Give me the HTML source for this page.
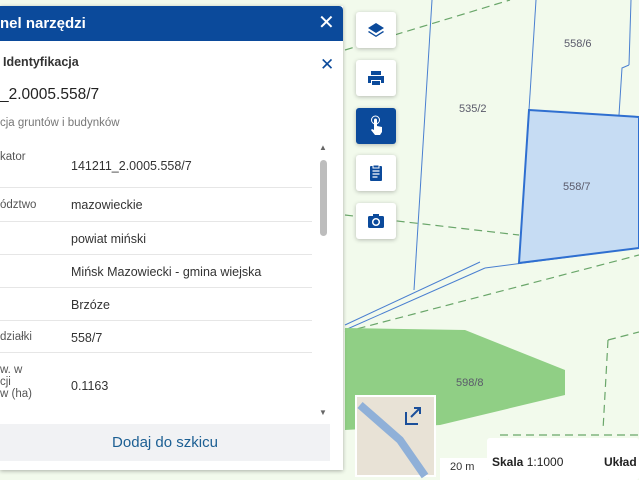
<!DOCTYPE html>
<html><head><meta charset="utf-8"><style>
*{margin:0;padding:0;box-sizing:border-box}
body{width:639px;height:480px;overflow:hidden;position:relative;background:#f2faec;font-family:"Liberation Sans",sans-serif}
.abs{position:absolute}
.panel{left:0;top:6px;width:343px;height:464px;background:#fff;box-shadow:0 1px 4px rgba(0,0,0,.3)}
.hdr{left:0;top:0;width:343px;height:35px;background:#0b4a9b;color:#fff;font-weight:bold;font-size:15px;line-height:35px;padding-left:0;border-radius:0 4px 0 0}
.row{position:absolute;left:0;width:312px;border-bottom:1px solid #e6e6e6;font-size:12.5px;color:#333}
.lab{position:absolute;left:0;color:#555;font-size:11.5px}
.val{position:absolute;left:71px}
.btn{position:absolute;left:356px;width:40px;height:36px;background:#fff;border-radius:3px;box-shadow:0 1px 4px rgba(0,0,0,.25);display:flex;align-items:center;justify-content:center}
</style></head><body>
<svg class="abs" style="left:0;top:0" width="639" height="480">
<g fill="none" stroke="#4a7fd0" stroke-width="1">
<line x1="432" y1="0" x2="414" y2="290"/><line x1="536" y1="0" x2="529" y2="110"/>
<line x1="631" y1="0" x2="629" y2="65"/><polyline points="629,65 622,68 619,115"/>
<line x1="345" y1="325" x2="480" y2="262"/><line x1="345" y1="330" x2="485" y2="268"/>
<line x1="485" y1="268" x2="639" y2="248"/>
</g>
<polygon points="529,110 639,117 639,248 519,263" fill="#c6dcf3" stroke="#2f6fd0" stroke-width="2"/>
<g fill="none" stroke="#6aa66a" stroke-width="1.2" stroke-dasharray="8,5">
<line x1="345" y1="50" x2="510" y2="0"/><line x1="345" y1="215" x2="519" y2="235"/>
<line x1="345" y1="332" x2="639" y2="255"/>
<line x1="608" y1="340" x2="603" y2="430"/><line x1="608" y1="340" x2="639" y2="332"/>
<line x1="500" y1="435" x2="639" y2="435"/>
</g>
<polygon points="345,328 465,330 565,370 565,395 440,425 345,430" fill="#90cf85"/>
<g font-size="11" fill="#5a5a6a" font-family="Liberation Sans"><text x="459" y="112">535/2</text><text x="564" y="47">558/6</text><text x="563" y="190">558/7</text><text x="456" y="386">598/8</text></g>
<rect x="356" y="396" width="79" height="80" fill="#e8e2d6" stroke="#fff" stroke-width="2"/>
<path d="M360,405 L400,440 L425,476" stroke="#8fb0d8" stroke-width="8" fill="none"/>
<path d="M406,412 v12 h12 M420,408 l-9,9 M414,408 h6 v6" stroke="#1b4f9a" stroke-width="2" fill="none"/>
<rect x="440" y="458" width="48" height="22" fill="#fff"/><text x="450" y="470" font-size="11" fill="#333">20 m</text>
<rect x="487" y="438" width="152" height="42" rx="3" fill="#fff"/>
<text x="492" y="466" font-size="12" fill="#222"><tspan font-weight="bold">Skala</tspan> 1:1000</text>
<text x="604" y="466" font-size="12" font-weight="bold" fill="#222">Układ</text>
</svg>
<div class="btn" style="top:12px"><svg width="20" height="20" viewBox="0 0 20 20"><path d="M10 3 L18 8 L10 13 L2 8Z M3 11 L10 15.5 L17 11 L18 12 L10 17 L2 12Z" fill="#0b4a9b"/></svg></div>
<div class="btn" style="top:60px"><svg width="20" height="20" viewBox="0 0 20 20"><path d="M5 3h10v4H5z M2 8h16v7h-3v-3H5v3H2z M6 13h8v4H6z" fill="#0b4a9b"/></svg></div>
<div class="btn" style="top:108px;background:#0b4a9b"><svg width="20" height="22" viewBox="0 0 20 22"><path d="M8 5a1.5 1.5 0 0 1 3 0v6l5 1v5l-2 3H9l-4-5 1-1 2 1z" fill="#fff"/><circle cx="9.5" cy="5" r="4" fill="none" stroke="#fff"/></svg></div>
<div class="btn" style="top:155px"><svg width="20" height="20" viewBox="0 0 20 20"><rect x="4" y="3" width="12" height="15" rx="1" fill="#0b4a9b"/><rect x="7" y="2" width="6" height="3" fill="#0b4a9b" stroke="#fff"/><path d="M6.5 8h7M6.5 11h7M6.5 14h5" stroke="#fff" stroke-width="1.3"/></svg></div>
<div class="btn" style="top:203px"><svg width="20" height="20" viewBox="0 0 20 20"><rect x="2" y="5" width="16" height="12" rx="1.5" fill="#0b4a9b"/><rect x="7" y="3" width="6" height="3" fill="#0b4a9b"/><circle cx="10" cy="11" r="3.3" fill="none" stroke="#fff" stroke-width="1.5"/></svg></div>
<div class="abs panel">
<div class="abs hdr">nel narzędzi<span style="position:absolute;left:318px;font-weight:normal;font-size:20px">✕</span></div>
<div class="abs" style="left:3px;top:49px;font-weight:bold;font-size:12.5px;color:#333">Identyfikacja</div>
<div class="abs" style="left:320px;top:49px;font-size:17px;color:#0b4a9b">✕</div>
<div class="abs" style="left:0;top:80px;font-size:15.5px;color:#222">_2.0005.558/7</div>
<div class="abs" style="left:0;top:111px;font-size:11.5px;color:#777">cja gruntów i budynków</div>
<div class="row" style="top:139px;height:43px"><span class="lab" style="top:6px">kator</span><span class="val" style="top:14px">141211_2.0005.558/7</span></div>
<div class="row" style="top:182px;height:34px"><span class="lab" style="top:11px">ództwo</span><span class="val" style="top:10px">mazowieckie</span></div>
<div class="row" style="top:216px;height:33px"><span class="val" style="top:10px">powiat miński</span></div>
<div class="row" style="top:249px;height:33px"><span class="val" style="top:10px">Mińsk Mazowiecki - gmina wiejska</span></div>
<div class="row" style="top:282px;height:33px"><span class="val" style="top:10px">Brzóze</span></div>
<div class="row" style="top:315px;height:32px"><span class="lab" style="top:10px">działki</span><span class="val" style="top:10px">558/7</span></div>
<div class="row" style="top:347px;height:64px;border:none"><span class="lab" style="top:11px;line-height:12px">w. w<br>cji<br>w (ha)</span><span class="val" style="top:26px">0.1163</span></div>
<div class="abs" style="left:319px;top:137px;font-size:8px;color:#666">▲</div>
<div class="abs" style="left:320px;top:154px;width:7px;height:76px;background:#bdbdbd;border-radius:4px"></div>
<div class="abs" style="left:319px;top:402px;font-size:8px;color:#666">▼</div>
<div class="abs" style="left:0;top:418px;width:330px;height:37px;background:#f1f2f4;color:#1c5f93;font-size:15px;text-align:center;line-height:37px">Dodaj do szkicu</div>
</div>
</body></html>
